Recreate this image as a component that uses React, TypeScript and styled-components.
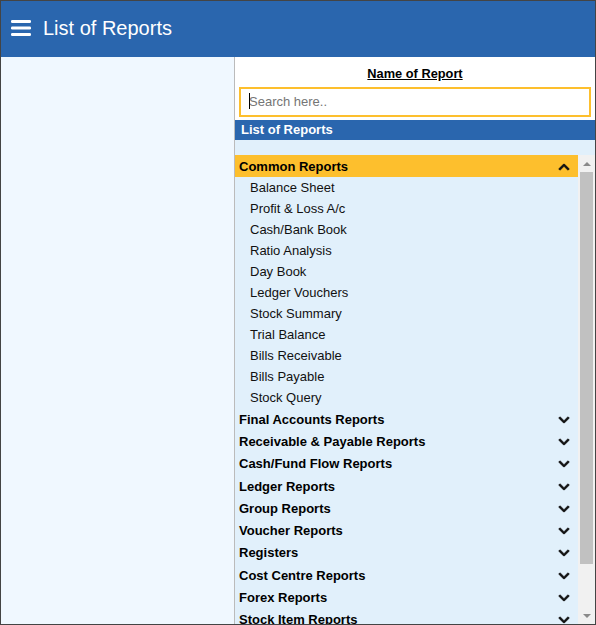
import React from 'react'
import styled, { createGlobalStyle } from 'styled-components'
import { FaChevronUp, FaChevronDown } from 'react-icons/fa'

const commonReports = [
  'Balance Sheet',
  'Profit & Loss A/c',
  'Cash/Bank Book',
  'Ratio Analysis',
  'Day Book',
  'Ledger Vouchers',
  'Stock Summary',
  'Trial Balance',
  'Bills Receivable',
  'Bills Payable',
  'Stock Query',
]

const otherGroups = [
  'Final Accounts Reports',
  'Receivable & Payable Reports',
  'Cash/Fund Flow Reports',
  'Ledger Reports',
  'Group Reports',
  'Voucher Reports',
  'Registers',
  'Cost Centre Reports',
  'Forex Reports',
  'Stock Item Reports',
]

const App: React.FC = () => {
  return (
    <>
      <GlobalStyle />
      <Frame>
        <Header>
          <MenuIcon viewBox="0 0 20 16">
            <rect x="0" y="0" width="20" height="3" rx="1.2" />
            <rect x="0" y="6.5" width="20" height="3" rx="1.2" />
            <rect x="0" y="13" width="20" height="3" rx="1.2" />
          </MenuIcon>
          <HeaderTitle>List of Reports</HeaderTitle>
        </Header>
        <Body>
          <SidePanel />
          <ReportPanel>
            <PanelTitle>Name of Report</PanelTitle>
            <SearchBox>
              <Caret />
              <SearchInput placeholder="Search here.." />
            </SearchBox>
            <ListHeading>List of Reports</ListHeading>
            <Spacer />
            <ListArea>
              <ReportList>
                <GroupRow $open>
                  Common Reports
                  <FaChevronUp size={12} />
                </GroupRow>
                {commonReports.map((name) => (
                  <ReportItem key={name}>{name}</ReportItem>
                ))}
                {otherGroups.map((name) => (
                  <GroupRow key={name}>
                    {name}
                    <FaChevronDown size={12} />
                  </GroupRow>
                ))}
              </ReportList>
              <ScrollBar>
                <ScrollArrow viewBox="0 0 8 4">
                  <path d="M4 0 L8 4 L0 4 Z" />
                </ScrollArrow>
                <ScrollThumb />
                <ScrollRest />
                <ScrollArrow viewBox="0 0 8 4">
                  <path d="M0 0 L8 0 L4 4 Z" />
                </ScrollArrow>
              </ScrollBar>
            </ListArea>
          </ReportPanel>
        </Body>
      </Frame>
    </>
  )
}
export default App

const GlobalStyle = createGlobalStyle`
  * {
    box-sizing: border-box;
  }
  html, body {
    margin: 0;
    padding: 0;
    height: 100%;
    overflow: hidden;
  }
  body {
    font-family: "Liberation Sans", Arial, sans-serif;
  }
  #root {
    height: 100%;
  }
`

const Frame = styled.div`
  width: 596px;
  height: 625px;
  border: 1px solid #444;
  display: flex;
  flex-direction: column;
  overflow: hidden;
`

const Header = styled.header`
  height: 56px;
  flex-shrink: 0;
  background-color: #2a66ae;
  display: flex;
  align-items: center;
  padding: 0 0 2px 10px;
  gap: 12px;
`

const MenuIcon = styled.svg`
  width: 20px;
  height: 16px;
  fill: #fff;
`

const HeaderTitle = styled.h1`
  margin: 0;
  color: #fff;
  font-size: 20px;
  font-weight: 400;
`

const Body = styled.div`
  flex: 1;
  min-height: 0;
  display: flex;
`

const SidePanel = styled.aside`
  width: 233px;
  flex-shrink: 0;
  background-color: #f0f8ff;
`

const ReportPanel = styled.section`
  flex: 1;
  min-width: 0;
  display: flex;
  flex-direction: column;
  border-left: 1px solid #bbb;
  background-color: #fff;
`

const PanelTitle = styled.div`
  height: 30px;
  padding-top: 10px;
  text-align: center;
  font-size: 12.8px;
  line-height: 14px;
  font-weight: 700;
  color: #000;
  text-decoration: underline;
`

const SearchBox = styled.div`
  position: relative;
  height: 30px;
  margin: 0 4px;
  border: 2px solid #fdbf2d;
  display: flex;
  align-items: center;
  padding: 0 0 2px 8px;
`

const Caret = styled.span`
  position: absolute;
  left: 8px;
  top: 4px;
  width: 1px;
  height: 16px;
  background-color: #000;
`

const SearchInput = styled.input`
  width: 100%;
  border: none;
  outline: none;
  padding: 0;
  font-family: "Liberation Sans", Arial, sans-serif;
  font-size: 13px;
  background: transparent;
  &::placeholder {
    color: #757575;
    opacity: 1;
  }
`

const ListHeading = styled.div`
  height: 20px;
  margin-top: 3px;
  padding-left: 6px;
  background-color: #2a66ae;
  color: #fff;
  font-size: 13px;
  line-height: 20px;
  font-weight: 700;
`

const Spacer = styled.div`
  height: 15px;
  flex-shrink: 0;
  background-color: #e1f0fb;
`

const ListArea = styled.div`
  flex: 1;
  min-height: 0;
  display: flex;
  background-color: #e1f0fb;
`

const ReportList = styled.div`
  flex: 1;
  min-width: 0;
  overflow: hidden;
`

const GroupRow = styled.div<{ $open?: boolean }>`
  height: 22.25px;
  padding: 0 8px 0 4px;
  display: flex;
  align-items: center;
  justify-content: space-between;
  font-size: 13px;
  font-weight: 700;
  color: #000;
  background-color: ${(p) => (p.$open ? '#fdbf2d' : 'transparent')};
  svg {
    color: #111;
    margin-top: 1px;
    stroke: currentColor;
    stroke-width: 30;
  }
`

const ReportItem = styled.div`
  height: 21px;
  padding-left: 15px;
  font-size: 13px;
  line-height: 21px;
  color: #111;
`

const ScrollBar = styled.div`
  width: 17px;
  flex-shrink: 0;
  padding-top: 1px;
  background-color: #f1f1f1;
  display: flex;
  flex-direction: column;
  align-items: center;
`

const ScrollArrow = styled.svg`
  width: 8px;
  height: 4px;
  margin: 6px 0;
  fill: #8a8a8a;
  flex-shrink: 0;
`

const ScrollThumb = styled.div`
  width: 13px;
  height: 392px;
  flex-shrink: 0;
  background-color: #c1c1c1;
`

const ScrollRest = styled.div`
  flex: 1;
`
